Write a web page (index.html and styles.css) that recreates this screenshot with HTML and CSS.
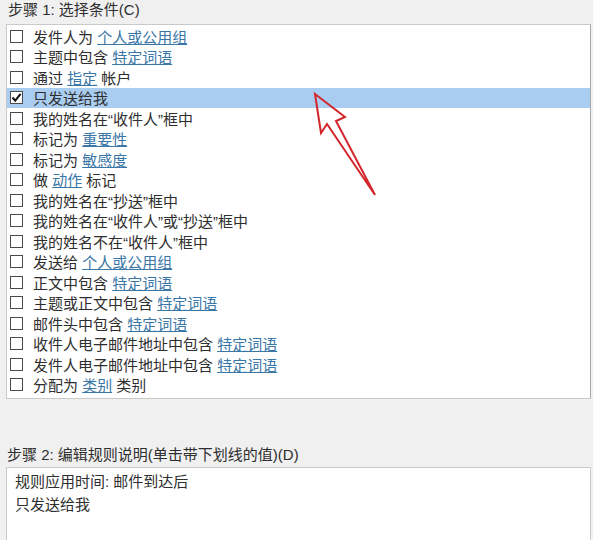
FILE: index.html
```html
<!DOCTYPE html>
<html lang="zh-CN">
<head>
    <meta charset="UTF-8">
    <title>规则向导</title>
    <link rel="stylesheet" href="styles.css">
</head>
<body>
<div class="wizard">
    <div class="step-title">步骤 1: 选择条件(C)</div>
    <div class="cond-list">
        <div class="row"><span class="box"></span><span>发件人为 <a>个人或公用组</a></span></div>
        <div class="row"><span class="box"></span><span>主题中包含 <a>特定词语</a></span></div>
        <div class="row"><span class="box"></span><span>通过 <a>指定</a> 帐户</span></div>
        <div class="row selected"><span class="box">
            <svg width="11" height="11" viewBox="0 0 11 11"><path d="M1.5 5.5 L4.2 8.6 L9.6 1.8" fill="none" stroke="#111" stroke-width="2"/></svg>
        </span><span>只发送给我</span></div>
        <div class="row"><span class="box"></span><span>我的姓名在“收件人”框中</span></div>
        <div class="row"><span class="box"></span><span>标记为 <a>重要性</a></span></div>
        <div class="row"><span class="box"></span><span>标记为 <a>敏感度</a></span></div>
        <div class="row"><span class="box"></span><span>做 <a>动作</a> 标记</span></div>
        <div class="row"><span class="box"></span><span>我的姓名在“抄送”框中</span></div>
        <div class="row"><span class="box"></span><span>我的姓名在“收件人”或“抄送”框中</span></div>
        <div class="row"><span class="box"></span><span>我的姓名不在“收件人”框中</span></div>
        <div class="row"><span class="box"></span><span>发送给 <a>个人或公用组</a></span></div>
        <div class="row"><span class="box"></span><span>正文中包含 <a>特定词语</a></span></div>
        <div class="row"><span class="box"></span><span>主题或正文中包含 <a>特定词语</a></span></div>
        <div class="row"><span class="box"></span><span>邮件头中包含 <a>特定词语</a></span></div>
        <div class="row"><span class="box"></span><span>收件人电子邮件地址中包含 <a>特定词语</a></span></div>
        <div class="row"><span class="box"></span><span>发件人电子邮件地址中包含 <a>特定词语</a></span></div>
        <div class="row"><span class="box"></span><span>分配为 <a>类别</a> 类别</span></div>
    </div>
    <div class="step-title step-two">步骤 2: 编辑规则说明(单击带下划线的值)(D)</div>
    <div class="desc">
        <div>规则应用时间: 邮件到达后</div>
        <div>只发送给我</div>
    </div>
</div>
<svg class="pointer" width="593" height="540" viewBox="0 0 593 540">
    <polygon points="315,94 345,117 336,121 375,195 327,124 321,133" fill="none" stroke="#d3262c" stroke-width="2" stroke-linejoin="miter"/>
</svg>
</body>
</html>
```

FILE: styles.css
```css
body {
    margin: 0;
    background-color: #f0f0f0;
    color: #2e2e2e;
    font-family: "Liberation Sans", "Noto Sans CJK SC", sans-serif;
    font-size: 15px;
    overflow: hidden;
    height: 540px;
    position: relative;
}

.wizard {
    padding: 0 2px 0 6px;
}

.step-title {
    line-height: 20px;
    margin-left: 2px;
}

.step-two {
    margin-top: 46px;
    margin-left: 1px;
}

/* condition list */
.cond-list {
    margin-top: 4px;
    background-color: #fff;
    border: 1px solid #c9c9c9;
    border-right-color: #a8a8a8;
    padding: 1px 0 3px 0;
}

.row {
    height: 20.5px;
    display: flex;
    align-items: center;
    padding-left: 3px;
    white-space: nowrap;
}

.row.selected {
    background-color: #a9cdf0;
}

.box {
    width: 11px;
    height: 11px;
    border: 1px solid #4a4a4a;
    background-color: #fff;
    margin-right: 10px;
    display: flex;
    align-items: center;
    justify-content: center;
    flex-shrink: 0;
}

.row a {
    color: #3a76a6;
    text-decoration: underline;
}

/* description box */
.desc {
    margin-top: 2px;
    background-color: #fff;
    border: 1px solid #c9c9c9;
    border-bottom: none;
    padding: 2px 8px;
    height: 68px;
    line-height: 23px;
}

.pointer {
    position: absolute;
    left: 0;
    top: 0;
    pointer-events: none;
}
```
